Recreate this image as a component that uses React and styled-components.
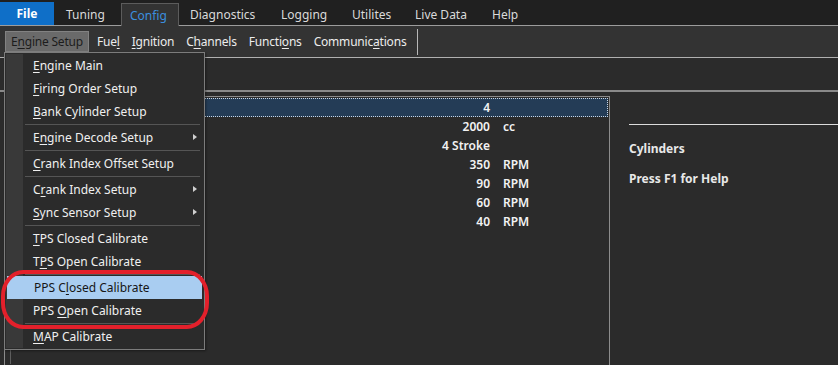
import React from "react";
import styled, { createGlobalStyle } from "styled-components";

const tabs = [
  { label: "File", width: 54, kind: "file" },
  { label: "Tuning", width: 67, pad: 12 },
  { label: "Config", width: 58, pad: 8, kind: "active" },
  { label: "Diagnostics", width: 91, pad: 11 },
  { label: "Logging", width: 71, pad: 11 },
  { label: "Utilites", width: 63, pad: 11 },
  { label: "Live Data", width: 77, pad: 11 },
  { label: "Help", width: 60, pad: 11 },
];

const tools = [
  { pre: "E", key: "n", post: "gine Setup", open: true },
  { pre: "Fue", key: "l", post: "" },
  { pre: "", key: "I", post: "gnition" },
  { pre: "C", key: "h", post: "annels" },
  { pre: "Functi", key: "o", post: "ns" },
  { pre: "Communic", key: "a", post: "tions" },
];

// sep = separator line before the item
const menuItems = [
  { pre: "", key: "E", post: "ngine Main" },
  { pre: "", key: "F", post: "iring Order Setup" },
  { pre: "", key: "B", post: "ank Cylinder Setup" },
  { pre: "E", key: "n", post: "gine Decode Setup", sep: true, sub: true },
  { pre: "", key: "C", post: "rank Index Offset Setup", sep: true },
  { pre: "C", key: "r", post: "ank Index Setup", sep: true, sub: true },
  { pre: "", key: "S", post: "ync Sensor Setup", sub: true },
  { pre: "", key: "T", post: "PS Closed Calibrate", sep: true },
  { pre: "T", key: "P", post: "S Open Calibrate" },
  { pre: "PPS C", key: "l", post: "osed Calibrate", sep: true, hot: true },
  { pre: "PPS ", key: "O", post: "pen Calibrate" },
  { pre: "", key: "M", post: "AP Calibrate", sep: true },
];

const rows = [
  { value: "4", unit: "", selected: true },
  { value: "2000", unit: "cc" },
  { value: "4 Stroke", unit: "" },
  { value: "350", unit: "RPM" },
  { value: "90", unit: "RPM" },
  { value: "60", unit: "RPM" },
  { value: "40", unit: "RPM" },
];

export default function App() {
  return (
    <Page>
      <GlobalStyle />
      <TopBar>
        {tabs.map((t) => (
          <Tab key={t.label} $width={t.width} $pad={t.pad} $kind={t.kind}>
            {t.label}
          </Tab>
        ))}
      </TopBar>
      <Toolbar>
        {tools.map((t) => (
          <ToolButton key={t.pre + t.key} $open={t.open}>
            {t.pre}
            <u>{t.key}</u>
            {t.post}
          </ToolButton>
        ))}
        <ToolSeparator />
      </Toolbar>
      <Strip />
      <Content>
        <TablePanel>
          <TableBody>
            {rows.map((r, i) => (
              <Row key={i} $selected={r.selected}>
                <Value>{r.value}</Value>
                <Unit>{r.unit}</Unit>
              </Row>
            ))}
          </TableBody>
        </TablePanel>
        <SidePanel>
          <HelpRule />
          <HelpTitle>Cylinders</HelpTitle>
          <HelpText>Press F1 for Help</HelpText>
        </SidePanel>
      </Content>

      <Menu>
        <Gutter />
        {menuItems.map((m) => (
          <React.Fragment key={m.pre + m.key + m.post}>
            {m.sep && <MenuSeparator />}
            <MenuItem $hot={m.hot}>
              {m.pre}
              <u>{m.key}</u>
              {m.post}
              {m.sub && <SubArrow />}
            </MenuItem>
          </React.Fragment>
        ))}
      </Menu>
      <Highlight />
    </Page>
  );
}

const GlobalStyle = createGlobalStyle`
  body {
    margin: 0;
    background: #2b2b2b;
    font-family: "Noto Sans", "Open Sans", sans-serif;
    overflow: hidden;
  }
  u {
    text-underline-offset: 2px;
  }
`;

const Page = styled.div`
  position: relative;
  width: 838px;
  height: 365px;
  display: flex;
  flex-direction: column;
  background: #2b2b2b;
  color: #ececec;
  font-size: 12px;
`;

const TopBar = styled.div`
  display: flex;
  align-items: flex-end;
  height: 25px;
  background: #202020;
  border-bottom: 1px solid #9c9c9c;
`;

const Tab = styled.div`
  width: ${(p) => p.$width}px;
  box-sizing: border-box;
  display: flex;
  align-items: center;
  justify-content: ${(p) => (p.$kind === "file" ? "center" : "flex-start")};
  padding-left: ${(p) => p.$pad || 0}px;
  height: ${(p) => (p.$kind === "file" ? 23 : 22)}px;
  color: ${(p) =>
    p.$kind === "active" ? "#3b8fdf" : p.$kind === "file" ? "#fff" : "#dadada"};
  font-weight: ${(p) => (p.$kind === "file" ? 700 : 400)};
  background: ${(p) =>
    p.$kind === "file" ? "#0f6fc8" : p.$kind === "active" ? "#333333" : "transparent"};
  ${(p) =>
    p.$kind === "active" &&
    `
    border: 1px solid #5c5c5c;
    border-bottom: none;
    margin-bottom: -1px;
    height: 23px;
  `}
`;

const Toolbar = styled.div`
  display: flex;
  align-items: center;
  height: 31px;
  padding-left: 5px;
  background: #333333;
  border-bottom: 1px solid #b0b0b0;
`;

const ToolButton = styled.div`
  height: 21px;
  box-sizing: border-box;
  display: flex;
  align-items: center;
  padding: 0 ${(p) => (p.$open ? 5 : 6)}px;
  margin-right: ${(p) => (p.$open ? 2 : 0)}px;
  white-space: pre;
  letter-spacing: -0.2px;
  color: ${(p) => (p.$open ? "#1c1c1c" : "#ececec")};
  background: ${(p) => (p.$open ? "#6a6a6a" : "transparent")};
  border: ${(p) => (p.$open ? "1px solid #828282" : "none")};
`;

const ToolSeparator = styled.div`
  width: 1px;
  height: 26px;
  margin-left: 5px;
  background: #b8b8b8;
`;

const Strip = styled.div`
  height: 32px;
  border-bottom: 2px solid #8a8a8a;
`;

const Content = styled.div`
  flex: 1;
  display: flex;
  padding-top: 4px;
`;

const TablePanel = styled.div`
  width: 606px;
  box-sizing: border-box;
  margin-left: 4px;
  padding: 1px;
  border: 1px solid #8c8c8c;
  border-bottom: none;
`;

const TableBody = styled.div`
  height: 100%;
  display: flex;
  flex-direction: column;
  margin-left: 4px;
  border-left: 1px solid #5e5e5e;
`;

const Row = styled.div`
  display: grid;
  grid-template-columns: 478px 1fr;
  align-items: center;
  height: 19px;
  box-sizing: border-box;
  font-weight: 600;
  color: #f2f2f2;
  background: ${(p) => (p.$selected ? "#243c56" : "transparent")};
  border: 1px dotted ${(p) => (p.$selected ? "#c9d6e4" : "transparent")};
`;

const Value = styled.div`
  text-align: right;
`;

const Unit = styled.div`
  padding-left: 13px;
`;

const SidePanel = styled.div`
  flex: 1;
  display: flex;
  flex-direction: column;
  padding-left: 19px;
`;

const HelpRule = styled.div`
  height: 1px;
  margin-top: 28px;
  background: #dcdcdc;
`;

const HelpTitle = styled.div`
  margin-top: 15px;
  font-weight: 700;
  color: #e8e8e8;
`;

const HelpText = styled(HelpTitle)`
  margin-top: 13px;
`;

const Menu = styled.div`
  position: absolute;
  left: 4px;
  top: 52px;
  width: 201px;
  box-sizing: border-box;
  padding: 1px;
  background: #2b2b2b;
  border: 1px solid #7c7c7c;
  display: flex;
  flex-direction: column;
  box-shadow: 1px 1px 2px rgba(0, 0, 0, 0.4);
`;

const Gutter = styled.div`
  position: absolute;
  left: 1px;
  top: 1px;
  bottom: 1px;
  width: 17px;
  background: #393939;
`;

const MenuItem = styled.div`
  position: relative;
  height: 23px;
  display: flex;
  align-items: center;
  padding-left: 27px;
  white-space: pre;
  color: ${(p) => (p.$hot ? "#161616" : "#f0f0f0")};
  background: ${(p) => (p.$hot ? "#a9cdf1" : "transparent")};
  margin: ${(p) => (p.$hot ? "0 1px" : "0")};
`;

const MenuSeparator = styled.div`
  position: relative;
  height: 3px;
  margin-left: 19px;
  margin-right: 3px;
  display: flex;
  align-items: center;
  &::after {
    content: "";
    flex: 1;
    height: 1px;
    background: #555555;
  }
`;

const SubArrow = styled.span`
  position: absolute;
  right: 6px;
  top: 8px;
  width: 0;
  height: 0;
  border-top: 3.5px solid transparent;
  border-bottom: 3.5px solid transparent;
  border-left: 4px solid #d0d0d0;
`;

const Highlight = styled.div`
  position: absolute;
  left: 1px;
  top: 270px;
  width: 208px;
  height: 59px;
  box-sizing: border-box;
  border: 4px solid #e3202b;
  border-radius: 22px / 26px;
  pointer-events: none;
`;
